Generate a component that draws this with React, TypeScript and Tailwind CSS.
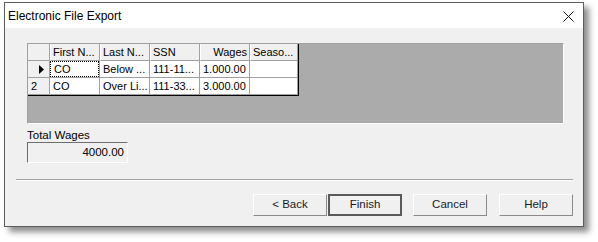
const font = { fontFamily: '"Liberation Sans", Arial, sans-serif' }

const cols = [
  { label: 'First N...', w: 'w-[50px]', right: false },
  { label: 'Last N...', w: 'w-[50px]', right: false },
  { label: 'SSN', w: 'w-[50px]', right: false },
  { label: 'Wages', w: 'w-[50px]', right: true },
  { label: 'Seaso...', w: 'w-[48px]', right: false },
]

const rows = [
  { head: 'arrow', cells: ['CO', 'Below ...', '111-11...', '1.000.00', ''] },
  { head: '2', cells: ['CO', 'Over Li...', '111-33...', '3.000.00', ''] },
]

function Btn({ label, def }: { label: string; def?: boolean }) {
  return (
    <button
      className={`w-[74px] h-[22px] text-[11.5px] text-[#1a1a2a] bg-[#f0f0f0] flex items-center justify-center ${
        def
          ? 'border-2 border-[#5a5a5a]'
          : 'border border-t-white border-l-white border-r-[#8a8a8a] border-b-[#8a8a8a]'
      }`}
    >
      {label}
    </button>
  )
}

export default function App() {
  return (
    <div className="w-[598px] h-[242px] bg-white pl-[4px] pt-[2px]" style={font}>
      <div className="relative w-[580px] h-[225px] border border-[#5c5c5c] bg-[#f0f0f0] flex flex-col shadow-[5px_5px_6px_rgba(0,0,0,0.45)]">
        {/* title bar */}
        <div className="h-[25px] bg-white flex items-center justify-between pl-[3px] pr-[9px]">
          <span className="text-[12px] text-black">Electronic File Export</span>
          <svg width="11" height="11" viewBox="0 0 11 11" className="mt-[2px]">
            <path d="M0.5 0.5 L10.5 10.5 M10.5 0.5 L0.5 10.5" stroke="#111" strokeWidth="1" />
          </svg>
        </div>

        {/* grid */}
        <div className="ml-[22px] mt-[15px] w-[537px] h-[81px] bg-[#ababab] border border-t-[#a0a0a0] border-l-[#a0a0a0] border-r-white border-b-white">
          <div className="w-fit border-r border-b border-black text-[11px] text-black">
            <div className="flex h-[17px]">
              <div className="w-[22px] bg-[#f0f0f0] border-r border-b border-[#a0a0a0]" />
              {cols.map(c => (
                <div
                  key={c.label}
                  className={`${c.w} bg-[#f0f0f0] border-r border-b border-[#a0a0a0] border-l border-l-white px-[2px] flex items-center ${c.right ? 'justify-end' : ''}`}
                >
                  {c.label}
                </div>
              ))}
            </div>
            {rows.map((r, i) => (
              <div key={i} className="flex h-[17px]">
                <div className="w-[22px] bg-[#f0f0f0] border-r border-b border-[#a0a0a0] flex items-center">
                  {r.head === 'arrow' ? (
                    <svg width="6" height="9" viewBox="0 0 6 9" className="ml-[11px]">
                      <path d="M0 0 L5 4.5 L0 9 Z" fill="#000" />
                    </svg>
                  ) : (
                    <span className="ml-[3px]">{r.head}</span>
                  )}
                </div>
                {r.cells.map((c, j) => (
                  <div
                    key={j}
                    className={`${cols[j].w} bg-white border-r border-b border-[#a0a0a0] flex items-stretch`}
                  >
                    <div
                      className={`flex-1 flex items-center pl-[3px] ${
                        i === 0 && j === 0 ? 'border border-dotted border-black pl-[2px]' : ''
                      }`}
                    >
                      {c}
                    </div>
                  </div>
                ))}
              </div>
            ))}
          </div>
        </div>

        {/* total wages */}
        <div className="ml-[22px] mt-[5px] h-[13px] leading-[13px] text-[11.5px] text-black">Total Wages</div>
        <div className="ml-[22px] w-[101px] h-[21px] border border-t-[#6e6e6e] border-l-[#6e6e6e] border-r-white border-b-white bg-[#f0f0f0] flex items-center justify-end pr-[3px] text-[11.5px] text-black">
          4000.00
        </div>

        {/* separator */}
        <div className="ml-[11px] mt-[16px] w-[557px] border-t border-t-[#a0a0a0] border-b border-b-white" />

        {/* buttons */}
        <div className="flex justify-end mr-[10px] mt-[13px]">
          <Btn label="< Back" />
          <div className="ml-[1px]">
            <Btn label="Finish" def />
          </div>
          <div className="ml-[11px]">
            <Btn label="Cancel" />
          </div>
          <div className="ml-[12px]">
            <Btn label="Help" />
          </div>
        </div>
      </div>
    </div>
  )
}
